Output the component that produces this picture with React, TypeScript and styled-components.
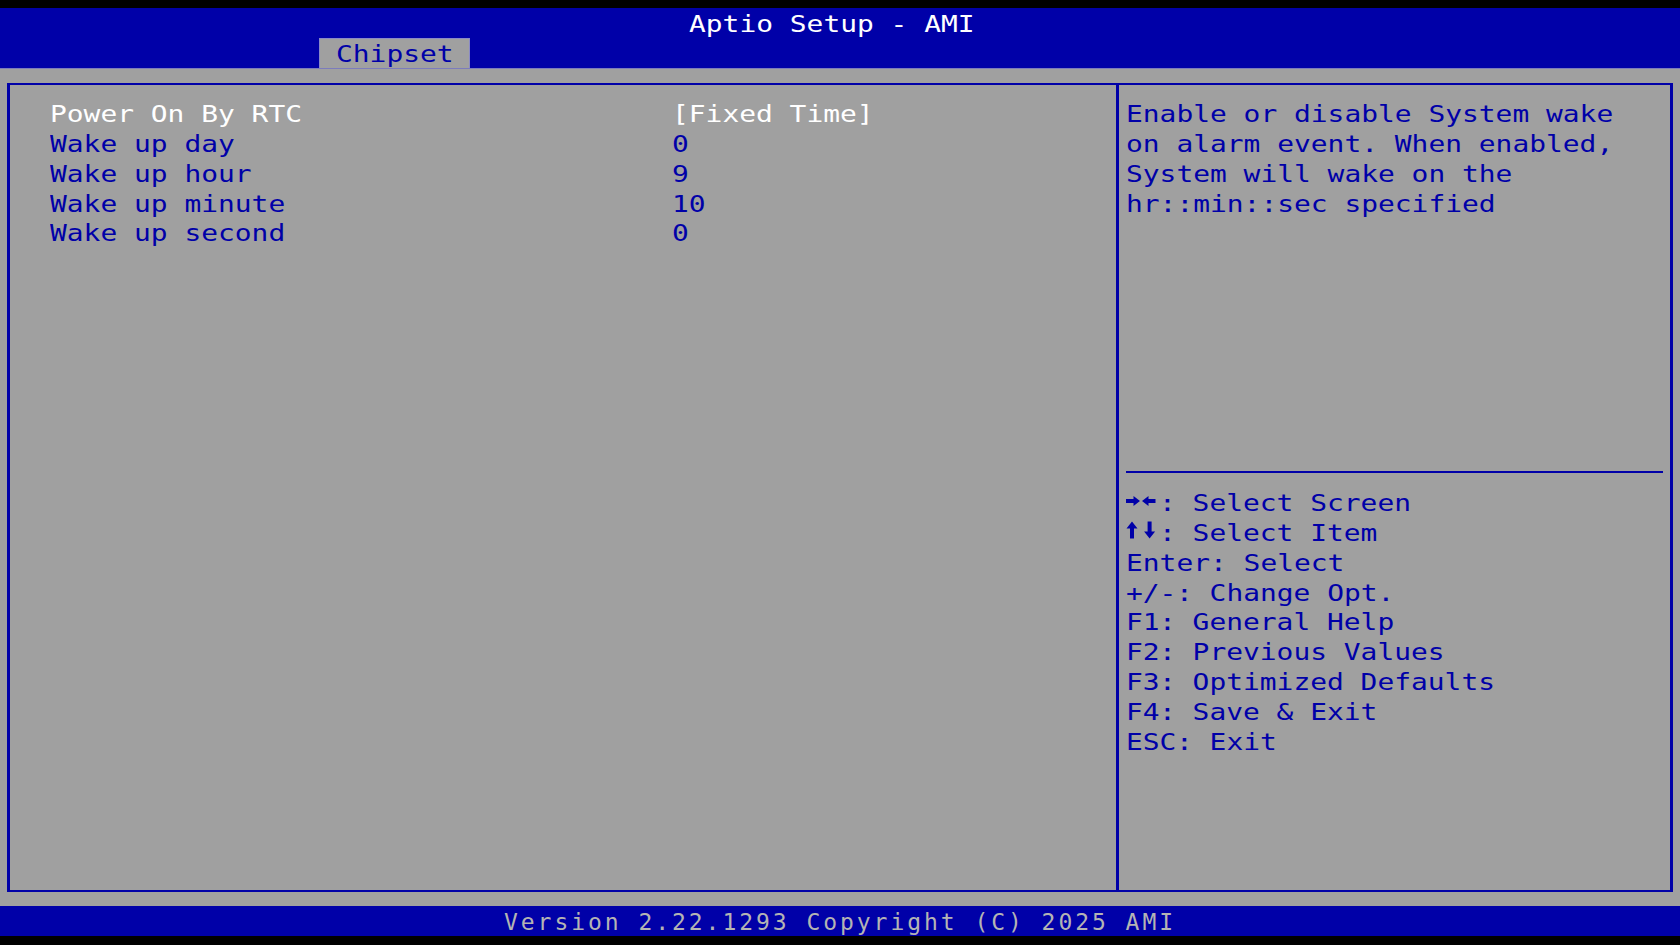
import styled, { createGlobalStyle } from 'styled-components';

// text-mode grid: 100 columns x 31 rows, stretched to 1680x945
const CW = 16.8;
const RH = 29.925;
const FONT_SIZE = 23;
const ADVANCE = FONT_SIZE * 0.60205;
const STRETCH = CW / ADVANCE;

const BLUE = '#0000a8';
const GREY = '#a0a0a0';
const WHITE = '#ffffff';
const DIM = '#b4b4b4';

const GlobalStyle = createGlobalStyle`
  html, body {
    margin: 0;
    padding: 0;
    background: #000;
    overflow: hidden;
  }
`;

const Screen = styled.div`
  width: 1680px;
  height: 945px;
  box-sizing: border-box;
  padding-top: 8px;
  background: #000;
  display: flex;
  flex-direction: column;
  font-family: 'DejaVu Sans Mono', 'Liberation Mono', monospace;
  font-size: ${FONT_SIZE}px;
`;

const Header = styled.header`
  background: ${BLUE};
  display: flex;
  flex-direction: column;
`;

const TextRow = styled.div<{ $indent?: number }>`
  display: flex;
  height: ${RH}px;
  line-height: ${RH + 4}px;
  white-space: pre;
  padding-left: ${(p) => (p.$indent ?? 0) * CW}px;
`;

const Txt = styled.span<{ $color: string }>`
  display: inline-block;
  width: ${(p) => (p.children ? String(p.children).length * ADVANCE : 0)}px;
  color: ${(p) => p.$color};
  white-space: pre;
  transform: scaleX(${STRETCH});
  transform-origin: left center;
`;

const KeyCell = styled.span<{ $cols: number }>`
  display: inline-block;
  width: ${(p) => p.$cols * CW}px;
`;

const Glyph = styled.svg`
  display: block;
  width: ${CW}px;
  height: ${RH}px;
  fill: ${BLUE};
`;

const TabRow = styled.div`
  height: ${RH}px;
  display: flex;
  padding-left: ${19 * CW}px;
`;

const Tab = styled.div`
  width: ${9 * CW}px;
  box-sizing: border-box;
  padding-left: ${CW}px;
  line-height: ${RH + 4}px;
  background: ${GREY};
  box-shadow: inset 1px 1px 0 #8a8ac6, inset -1px 0 0 #8a8ac6;
`;

const Body = styled.main`
  height: ${28 * RH}px;
  box-sizing: border-box;
  padding: ${RH / 2 - 1}px 6.9px;
  background: ${GREY};
  border-top: 1px solid #7c7cbc;
  display: flex;
`;

const Frame = styled.div`
  flex: 1;
  display: flex;
  border-style: solid;
  border-color: ${BLUE};
  border-width: 2px 3px;
`;

const ItemPanel = styled.section`
  width: ${66 * CW}px;
  box-sizing: border-box;
  border-right: 3px solid ${BLUE};
  padding: ${RH / 2 - 2}px 0 0 40.5px;
`;

const ItemRow = styled.div`
  display: grid;
  grid-template-columns: ${37 * CW}px 1fr;
  height: ${RH}px;
  line-height: ${RH + 4}px;
`;

const HelpPanel = styled.section`
  flex: 1;
  display: flex;
  flex-direction: column;
  padding: ${RH / 2 - 2}px 0 0 6.9px;
`;

const HelpText = styled.div`
  height: ${12 * RH}px;
`;

const Separator = styled.div`
  height: ${RH}px;
  display: flex;
  align-items: center;
`;

const Rule = styled.div`
  width: ${32 * CW}px;
  height: 2px;
  background: ${BLUE};
`;

const Footer = styled.footer`
  height: ${RH}px;
  line-height: ${RH + 4}px;
  background: ${BLUE};
  color: ${DIM};
  padding-left: ${30 * CW}px;
  letter-spacing: ${CW - ADVANCE}px;
  white-space: pre;
`;

type Dir = 'right' | 'left' | 'up' | 'down';

const arrowShapes: Record<Dir, string> = {
  right: 'M0 12H7.5V9L14 14L7.5 19V16H0Z',
  left: 'M13.5 12H6.5V9L0 14L6.5 19V16H13.5Z',
  up: 'M6 4.5L11.5 11.5H8V21.5H4V11.5H0.5Z',
  down: 'M7.6 21.5L13.1 14.5H9.6V4.5H5.6V14.5H2.1Z',
};

function Arrow({ dir }: { dir: Dir }) {
  return (
    <Glyph viewBox={`0 0 ${CW} ${RH}`}>
      <path d={arrowShapes[dir]} />
    </Glyph>
  );
}

const items = [
  { label: 'Power On By RTC', value: '[Fixed Time]', active: true },
  { label: 'Wake up day', value: '0' },
  { label: 'Wake up hour', value: '9' },
  { label: 'Wake up minute', value: '10' },
  { label: 'Wake up second', value: '0' },
];

const help = [
  'Enable or disable System wake',
  'on alarm event. When enabled,',
  'System will wake on the',
  'hr::min::sec specified',
];

const keys: { key: string; rest: string; arrows?: [Dir, Dir] }[] = [
  { key: '→←', rest: ': Select Screen', arrows: ['right', 'left'] },
  { key: '↑↓', rest: ': Select Item', arrows: ['up', 'down'] },
  { key: 'Enter', rest: ': Select' },
  { key: '+/-', rest: ': Change Opt.' },
  { key: 'F1', rest: ': General Help' },
  { key: 'F2', rest: ': Previous Values' },
  { key: 'F3', rest: ': Optimized Defaults' },
  { key: 'F4', rest: ': Save & Exit' },
  { key: 'ESC', rest: ': Exit' },
];

export default function App() {
  return (
    <Screen>
      <GlobalStyle />
      <Header>
        <TextRow $indent={41}>
          <Txt $color={WHITE}>Aptio Setup - AMI</Txt>
        </TextRow>
        <TabRow>
          <Tab>
            <Txt $color={BLUE}>Chipset</Txt>
          </Tab>
        </TabRow>
      </Header>
      <Body>
        <Frame>
          <ItemPanel>
            {items.map((it) => (
              <ItemRow key={it.label}>
                <div>
                  <Txt $color={it.active ? WHITE : BLUE}>{it.label}</Txt>
                </div>
                <div>
                  <Txt $color={it.active ? WHITE : BLUE}>{it.value}</Txt>
                </div>
              </ItemRow>
            ))}
          </ItemPanel>
          <HelpPanel>
            <HelpText>
              {help.map((line) => (
                <TextRow key={line}>
                  <Txt $color={BLUE}>{line}</Txt>
                </TextRow>
              ))}
            </HelpText>
            <Separator>
              <Rule />
            </Separator>
            {keys.map((k) => (
              <TextRow key={k.key}>
                {k.arrows ? (
                  <>
                    <Arrow dir={k.arrows[0]} />
                    <Arrow dir={k.arrows[1]} />
                  </>
                ) : (
                  <KeyCell $cols={k.key.length}>
                    <Txt $color={BLUE}>{k.key}</Txt>
                  </KeyCell>
                )}
                <Txt $color={BLUE}>{k.rest}</Txt>
              </TextRow>
            ))}
          </HelpPanel>
        </Frame>
      </Body>
      <Footer>Version 2.22.1293 Copyright (C) 2025 AMI</Footer>
    </Screen>
  );
}
